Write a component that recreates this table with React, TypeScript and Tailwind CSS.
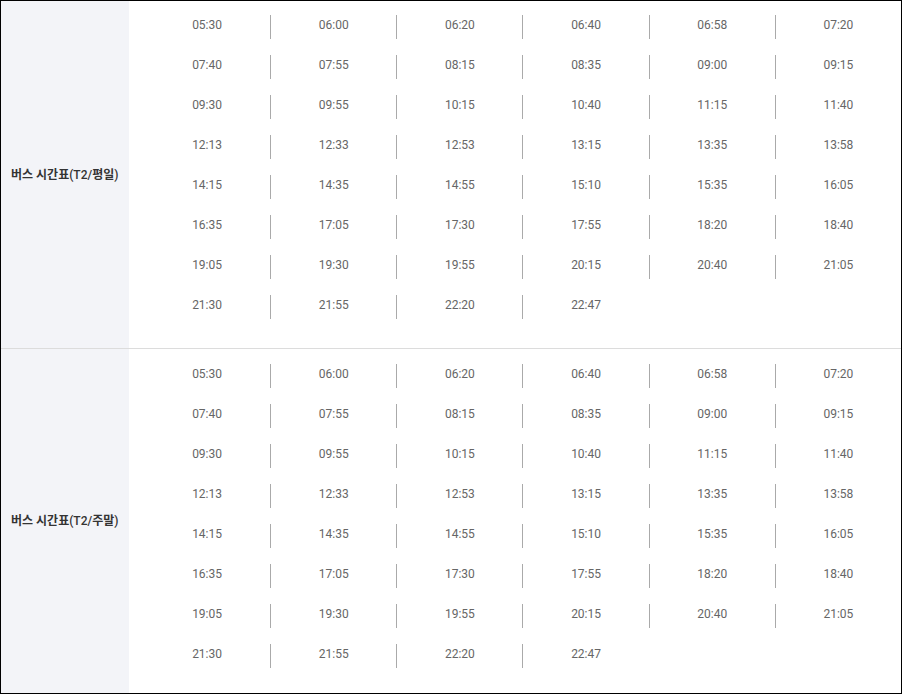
import React from "react";

const TIMES = [
  "05:30", "06:00", "06:20", "06:40", "06:58", "07:20",
  "07:40", "07:55", "08:15", "08:35", "09:00", "09:15",
  "09:30", "09:55", "10:15", "10:40", "11:15", "11:40",
  "12:13", "12:33", "12:53", "13:15", "13:35", "13:58",
  "14:15", "14:35", "14:55", "15:10", "15:35", "16:05",
  "16:35", "17:05", "17:30", "17:55", "18:20", "18:40",
  "19:05", "19:30", "19:55", "20:15", "20:40", "21:05",
  "21:30", "21:55", "22:20", "22:47",
];

interface RowProps {
  day: string;
  times: string[];
  className: string;
  listClass: string;
}

const ScheduleRow: React.FC<RowProps> = ({ day, times, className, listClass }) => {
  return (
    <div className={`flex shrink-0 ${className}`}>
      <div className="w-[128px] shrink-0 bg-[#f3f4f8] flex items-center pl-[10px]">
        <span className="text-[12px] text-[#333]">
          <b className="font-bold">버스 시간표</b>
          <span className="font-medium">(T2/</span>
          <b className="font-bold">{day}</b>
          <span className="font-medium">)</span>
        </span>
      </div>
      <div className={`flex-1 pl-[15px] ${listClass}`}>
        <ul className="grid grid-cols-6">
          {times.map((t, i) => (
            <li key={t + i} className="h-10">
              <div
                className={`h-6 text-center text-[12px] leading-5 text-[#666] ${
                  i % 6 === 0 ? "" : "border-l border-[#aaa]"
                }`}
              >
                {t}
              </div>
            </li>
          ))}
        </ul>
      </div>
    </div>
  );
};

export default function App() {
  return (
    <div
      className="w-[902px] h-[694px] border border-black bg-white flex flex-col overflow-hidden"
      style={{ fontFamily: 'Roboto, "Noto Sans CJK KR", sans-serif' }}
    >
      <ScheduleRow day="평일" times={TIMES} className="h-[347px]" listClass="pt-[14px]" />
      <div className="h-px shrink-0 bg-[#dcdcdc]" />
      <ScheduleRow day="주말" times={TIMES} className="h-[344px]" listClass="pt-[15px]" />
    </div>
  );
}
